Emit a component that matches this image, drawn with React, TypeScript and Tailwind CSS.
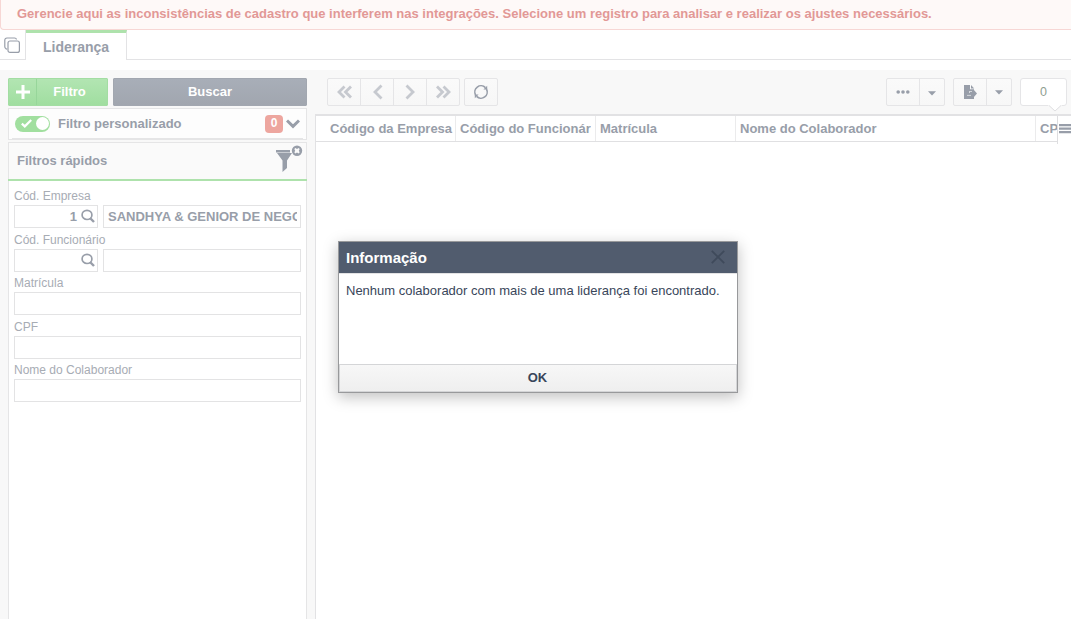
import React from "react";

function SearchIcon() {
  return (
    <svg width="14" height="14" viewBox="0 0 14 14" fill="none" stroke="#989ea9" className="shrink-0 -translate-y-px translate-x-px">
      <ellipse cx="6" cy="5.9" rx="4.9" ry="4.6" strokeWidth="1.7" />
      <path d="M9 9l4 4" strokeWidth="2.4" />
    </svg>
  );
}

function Chevrons({ double = false, flip = false }: { double?: boolean; flip?: boolean }) {
  return (
    <svg width="16" height="16" viewBox="0 0 16 16" fill="none" stroke="#c6c9cf" strokeWidth="2.8" className={flip ? "-scale-x-100" : "translate-x-px"}>
      {double ? <path d="M7.5 2.5L2 8l5.5 5.5M14 2.5L8.5 8l5.5 5.5" /> : <path d="M11.5 1.6L5 8l6.5 6.4" />}
    </svg>
  );
}

function Caret() {
  return (
    <svg width="8" height="5" viewBox="0 0 8 5" fill="#989ea9">
      <path d="M0 .3h8L4 4.5z" />
    </svg>
  );
}

const field = "h-[23px] border border-[#e3e3e4] bg-white";

function Label({ children, tall = false }: { children: React.ReactNode; tall?: boolean }) {
  return (
    <div className={`${tall ? "h-[21px] pt-[5px]" : "h-5 pt-1"} text-[12px] font-normal leading-[14px] text-[#a7acb4]`}>
      {children}
    </div>
  );
}

function CodeRow({ code = "", name = "" }: { code?: string; name?: string }) {
  return (
    <div className="flex gap-[5px]">
      <div className={`${field} flex w-[84px] items-center justify-end gap-[3px] pr-[3px]`}>
        <span>{code}</span>
        <SearchIcon />
      </div>
      <div className={`${field} w-[198px] pr-[3px] pl-1`}>
        <div className="overflow-hidden whitespace-nowrap leading-[21px]">{name}</div>
      </div>
    </div>
  );
}

function Sidebar() {
  return (
    <aside className="flex w-[299px] shrink-0 flex-col">
      <div className="flex h-7 shrink-0 gap-[5px] text-white">
        <div className="flex w-[100px] rounded-[1px] border border-[#a3dda3] bg-linear-to-b from-[#b2e5b2] to-[#a0dea0]">
          <div className="flex w-7 items-center justify-center border-r border-[#97d69a]">
            <svg width="14" height="14" viewBox="0 0 14 14" stroke="white" strokeWidth="3">
              <path d="M7 0v14M0 7h14" />
            </svg>
          </div>
          <div className="flex-1 pr-[5px] text-center leading-[25px]">Filtro</div>
        </div>
        <div className="w-[194px] rounded-[1px] border border-[#a2a7b0] bg-linear-to-b from-[#a8aeb8] to-[#a1a6af] text-center leading-[25px]">
          Buscar
        </div>
      </div>

      <div className="mt-0.5 h-8 shrink-0 border border-[#e5e5e6] bg-[#fdfdfd] px-[3px]">
        <div className="flex h-[30px] items-center border-b border-[#e5e5e6] pl-[3px]">
          <div className="flex h-4 w-[35px] items-center justify-between rounded-full bg-[#a1df9f] pr-px pl-1.5">
            <svg width="11" height="9" viewBox="0 0 11 9" fill="none" stroke="white" strokeWidth="2.2">
              <path d="M.8 4.6l3 2.8L10.2 1" />
            </svg>
            <div className="size-[13px] rounded-full bg-white" />
          </div>
          <span className="ml-2 flex-1 leading-[29px]">Filtro personalizado</span>
          <span className="h-[18px] w-[18px] rounded-[4px] bg-[#eda69f] text-center text-[12px] leading-[17px] text-white">0</span>
          <svg width="14" height="10" viewBox="0 0 14 10" fill="none" stroke="#989ea9" strokeWidth="3" className="mr-[3px] ml-[3px]">
            <path d="M1 1.5l6 5.8 6-5.8" />
          </svg>
        </div>
      </div>

      <section className="mt-0.5 flex flex-1 flex-col border border-b-0 border-[#e5e5e6] bg-white">
        <header className="flex h-[36px] shrink-0 items-center justify-between bg-[#fafafa] pr-[3px] pl-2">
          <span className="leading-9">Filtros rápidos</span>
          <svg width="27" height="28" viewBox="0 0 27 28" className="-translate-y-[3px]">
            <path d="M0 6h14v2.5H0zM1 9h15L11 16.500V24l-4.500 4V16.500z" fill="#989ea9" />
            <circle cx="21" cy="6.700" r="5.200" fill="#989ea9" />
            <path d="M18.300 5.100l1.100-1.100 1.600.9 1.600-.9 1.100 1.100-.9 1.600.9 1.600-1.100 1.100-1.600-.9-1.600.9-1.100-1.100.9-1.600z" fill="#fafafa" />
          </svg>
        </header>
        <div className="-mx-px h-0.5 shrink-0 bg-[#aee2ac]" />
        <div className="px-[5px] pt-1">
          <Label>Cód. Empresa</Label>
          <CodeRow code="1" name="SANDHYA & GENIOR DE NEGOCIOS" />
          <Label tall>Cód. Funcionário</Label>
          <CodeRow />
          <Label>Matrícula</Label>
          <div className={field} />
          <Label tall>CPF</Label>
          <div className={field} />
          <Label>Nome do Colaborador</Label>
          <div className={field} />
        </div>
      </section>
    </aside>
  );
}

const group = "flex h-7 rounded-[2px] border border-[#e5e5e7] bg-linear-to-b from-[#fafafa] to-[#f7f7f7]";
const cell = "flex items-center justify-center";

function Toolbar() {
  return (
    <div className="flex h-[36px] shrink-0 pl-3">
      <div className={`${group} w-[133px] divide-x divide-[#e5e5e7]`}>
        <div className={`${cell} flex-1`}><Chevrons double /></div>
        <div className={`${cell} flex-1`}><Chevrons /></div>
        <div className={`${cell} flex-1`}><Chevrons flip /></div>
        <div className={`${cell} flex-1`}><Chevrons double flip /></div>
      </div>
      <div className={`${group} ml-1 w-[34px] items-center justify-center`}>
        <svg width="16" height="16" viewBox="0 0 16 16" fill="none" stroke="#989ea9" strokeWidth="1.6">
          <path d="M2.600 11A6.200 6.200 0 0 1 12.400 3.600M13.400 5A6.200 6.200 0 0 1 3.600 12.400" />
          <path d="M14.200 1.800v3.800h-3.800zM1.800 14.200v-3.800h3.800z" fill="#989ea9" stroke="none" />
        </svg>
      </div>
      <div className={`${group} ml-auto w-[59px] divide-x divide-[#e5e5e7]`}>
        <div className={`${cell} w-[33px]`}>
          <svg width="14" height="4" viewBox="0 0 14 4" fill="#989ea9">
            <circle cx="2.2" cy="2" r="1.8" /><circle cx="7" cy="2" r="1.8" /><circle cx="11.8" cy="2" r="1.8" />
          </svg>
        </div>
        <div className={`${cell} flex-1 pt-0.5`}><Caret /></div>
      </div>
      <div className={`${group} ml-2 w-[59px] divide-x divide-[#e5e5e7]`}>
        <div className={`${cell} w-[33px]`}>
          <svg width="14" height="14" viewBox="0 0 14 14">
            <path d="M1 0h6v4.3h4V14H1z" fill="#989ea9" />
            <path d="M8 0l3.2 3.4H8z" fill="#989ea9" />
            <path d="M7 6.5h3.5V4.5l3.5 4-3.5 4V10H7z" fill="#989ea9" />
            <path d="M4 10.400h4M7 6.500h2M6.500 6v2" stroke="#d5d8dc" strokeWidth="1" />
          </svg>
        </div>
        <div className={`${cell} flex-1`}><Caret /></div>
      </div>
      <div className="relative mr-1 ml-2 h-7 w-[47px] rounded-[3px] border border-[#e5e5e7] bg-white text-center text-[12.5px] font-normal leading-[27px] text-[#8f9e91]">
        0
        <svg width="14" height="8" viewBox="0 0 14 8" className="absolute top-[25px] left-[27px]">
          <path d="M0 1.500h1L7 7.200L13 1.500h1V0H0z" fill="white" />
          <path d="M1 1.500L7 7l6-5.500" fill="none" stroke="#dfdfe1" />
        </svg>
      </div>
    </div>
  );
}

const column = "h-[25px] shrink-0 overflow-hidden whitespace-nowrap border-r border-[#ebebec] pr-1 pl-1 leading-[25px]";

function Grid() {
  return (
    <div className="flex flex-1 flex-col border-t-2 border-l border-[#e2e2e4] bg-white">
      <div className="flex h-[26px] border-b border-[#e0e0e2]">
        <div className={`${column} w-[140px]`}><span className="pl-2.5">Código da Empresa</span></div>
        <div className={`${column} w-[140px]`}><div className="overflow-hidden">Código do Funcionário</div></div>
        <div className={`${column} w-[140px]`}>Matrícula</div>
        <div className={`${column} w-[300px]`}>Nome do Colaborador</div>
        <div className="h-7 w-[22px] shrink-0 overflow-hidden border-r border-[#dedee0] pl-1 leading-[25px]">CPF</div>
        <div className="h-[26px] flex-1 bg-white pt-[7px] pl-px">
          <svg width="12" height="12" viewBox="0 0 12 12" fill="#989ea9">
            <path d="M0 1h14v2.300H0zM0 4.500h14v2.300H0zM0 8h14v2.300H0z" />
          </svg>
        </div>
      </div>
    </div>
  );
}

function Dialog() {
  return (
    <div className="absolute top-[241px] left-[338px] flex h-[152px] w-[400px] flex-col border border-[#98999b] bg-white text-[#39465a] shadow-[0_4px_14px_rgba(0,0,0,0.25)]">
      <div className="flex h-[31px] shrink-0 items-center justify-between bg-[#515c6e] pr-3 pl-[7px] text-[15px] text-white">
        <span className="leading-8">Informação</span>
        <svg width="14" height="14" viewBox="0 0 14 14" stroke="#3f4a5b" strokeWidth="1.8" className="mb-px">
          <path d="M.8.8l12.4 12.4M13.2.8L.8 13.2" />
        </svg>
      </div>
      <div className="flex-1 border-t border-[#e3e3e4] pt-[9px] pl-[7px] text-[13px] font-normal leading-[15px]">
        Nenhum colaborador com mais de uma liderança foi encontrado.
      </div>
      <div className="h-7 shrink-0 border border-[#d4d5d7] bg-linear-to-b from-[#f7f7f7] to-[#efefef] pr-px text-center leading-[25px]">OK</div>
    </div>
  );
}

export default function App() {
  return (
    <div className="relative flex h-[619px] w-[1071px] flex-col overflow-hidden bg-white font-['Liberation_Sans',Arial,sans-serif] text-[13px] font-bold text-[#989ea9]">
      <div className="h-[30px] shrink-0 rounded-bl-[4px] border-b border-l border-[#f7d7d5] bg-[#fef9f8] pl-4 leading-[27px] text-[#e29896]">
        Gerencie aqui as inconsistências de cadastro que interferem nas integrações. Selecione um registro para analisar e realizar os ajustes necessários.
      </div>
      <nav className="flex h-[30px] shrink-0">
        <div className="w-[26px] border-r border-b border-[#e3e3e5] pt-[7px] pl-1">
          <svg width="17" height="17" viewBox="0 0 17 17" fill="none" stroke="#989ea9" strokeWidth="1.2">
            <path d="M3.2 12.3L1.8 11.6Q.8 11 .8 9.8V3.2Q.8 1 3 1h7.5q1.8 0 2 1.5" />
            <rect x="4" y="4" width="11.4" height="11.4" rx="2" />
          </svg>
        </div>
        <div className="w-[101px] border-t-[3px] border-r border-t-[#aee2ac] border-r-[#e3e3e5] pl-[17px] text-[14px] leading-[29px]">Liderança</div>
        <div className="flex-1 border-b border-[#e3e3e5]" />
      </nav>
      <div className="mt-2.5 flex flex-1 gap-2 bg-[#f8f8f8] pt-2 pl-2">
        <Sidebar />
        <main className="flex min-w-0 flex-1 flex-col">
          <Toolbar />
          <Grid />
        </main>
      </div>
      <Dialog />
    </div>
  );
}
